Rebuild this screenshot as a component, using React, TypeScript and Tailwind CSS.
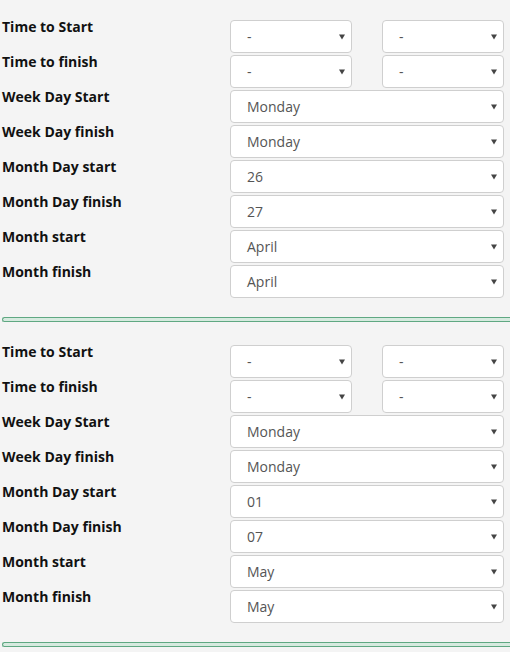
import React from "react";

type Row = { label: string; values: string[] };

const sections: Row[][] = [
  [
    { label: "Time to Start", values: ["-", "-"] },
    { label: "Time to finish", values: ["-", "-"] },
    { label: "Week Day Start", values: ["Monday"] },
    { label: "Week Day finish", values: ["Monday"] },
    { label: "Month Day start", values: ["26"] },
    { label: "Month Day finish", values: ["27"] },
    { label: "Month start", values: ["April"] },
    { label: "Month finish", values: ["April"] },
  ],
  [
    { label: "Time to Start", values: ["-", "-"] },
    { label: "Time to finish", values: ["-", "-"] },
    { label: "Week Day Start", values: ["Monday"] },
    { label: "Week Day finish", values: ["Monday"] },
    { label: "Month Day start", values: ["01"] },
    { label: "Month Day finish", values: ["07"] },
    { label: "Month start", values: ["May"] },
    { label: "Month finish", values: ["May"] },
  ],
];

const Arrow = () => (
  <svg width="6" height="6" viewBox="0 0 6 6" className="shrink-0">
    <path d="M0 0.5 H6 L3 5.5 Z" fill="#444" />
  </svg>
);

const FakeSelect = ({ value, small }: { value: string; small?: boolean }) => (
  <div
    className={
      "flex h-[33px] items-center justify-between rounded-[4px] border border-[#cfcfcf] bg-white pl-4 pr-[6px] text-[14px] text-[#555] " +
      (small ? "w-[122px]" : "w-[274px]")
    }
  >
    <span>{value}</span>
    <Arrow />
  </div>
);

const Section = ({ rows }: { rows: Row[] }) => (
  <div className="flex flex-col gap-[2px]">
    {rows.map((row, i) => (
      <div key={i} className="flex items-start">
        <div className="w-[230px] pl-[2px] text-[14px] font-bold leading-[14px] text-[#111]">
          {row.label}
        </div>
        {row.values.length === 2 ? (
          <div className="flex gap-[30px]">
            <FakeSelect value={row.values[0]} small />
            <FakeSelect value={row.values[1]} small />
          </div>
        ) : (
          <FakeSelect value={row.values[0]} />
        )}
      </div>
    ))}
  </div>
);

export default function App() {
  return (
    <div
      className="min-h-[652px] w-[510px] overflow-hidden bg-[#f4f4f4]"
      style={{ fontFamily: '"Open Sans", "Liberation Sans", sans-serif' }}
    >
      {sections.map((rows, i) => (
        <div key={i} className={i === 0 ? "pt-[20px]" : "pt-[23px]"}>
          <Section rows={rows} />
          <div className="mt-[19px] ml-[2px] h-[5px] rounded-l-[3px] border border-r-0 border-[#5fa882] bg-[#d6eadf]" />
        </div>
      ))}
    </div>
  );
}
